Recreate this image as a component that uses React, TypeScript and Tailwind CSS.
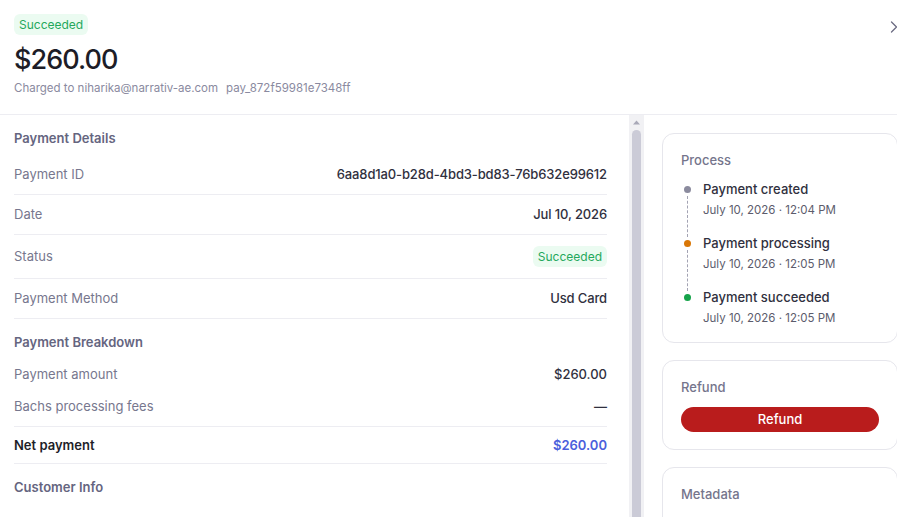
import { ChevronRight } from "lucide-react";

const details = [
  { label: "Payment ID", value: "6aa8d1a0-b28d-4bd3-bd83-76b632e99612" },
  { label: "Date", value: "Jul 10, 2026" },
  { label: "Status", badge: true },
  { label: "Payment Method", value: "Usd Card" },
];

const events = [
  { title: "Payment created", time: "July 10, 2026 · 12:04 PM", dot: "bg-[#8b8b9e]" },
  { title: "Payment processing", time: "July 10, 2026 · 12:05 PM", dot: "bg-[#d97706]" },
  { title: "Payment succeeded", time: "July 10, 2026 · 12:05 PM", dot: "bg-[#16a34a]" },
];

function Badge() {
  return (
    <span className="flex h-[21px] items-center rounded-md bg-[#ebfbf1] px-[5px] text-[12px] leading-4 text-[#25a85c]">
      Succeeded
    </span>
  );
}

function SectionTitle({ children }: { children: React.ReactNode }) {
  return (
    <div className="h-[18px] text-[13px] font-semibold leading-[18px] text-[#656580]">
      {children}
    </div>
  );
}

function Card({
  title,
  children,
  tight,
}: {
  title: string;
  children?: React.ReactNode;
  tight?: boolean;
}) {
  return (
    <div
      className={`rounded-xl border border-[#e6e6ec] px-[18px] pt-[17px] ${
        tight ? "pb-[16px]" : "pb-[17px]"
      }`}
    >
      <div className="h-[18px] text-[13px] font-medium leading-[18px] text-[#75758c]">{title}</div>
      {children}
    </div>
  );
}

export default function App() {
  return (
    <div
      className="h-[517px] w-[897px] overflow-hidden bg-white"
      style={{ fontFamily: "Inter, 'Noto Sans', sans-serif" }}
    >
      <div className="flex h-[620px] w-[916px] flex-col">
        {/* Header */}
        <div className="flex items-start justify-between border-b border-[#ededf2] pl-[14px] pr-3 pt-[14px] pb-[18px]">
          <div className="flex flex-col items-start">
            <Badge />
            <div className="mt-2 text-[27px] font-medium leading-[34px] tracking-[-0.035em] text-[#1d1d27]">
              $260.00
            </div>
            <div className="mt-[3px] flex gap-2 text-[11.5px] leading-4 text-[#8a8aa0]">
              <span>Charged to niharika@narrativ-ae.com</span>
              <span>pay_872f59981e7348ff</span>
            </div>
          </div>
          <ChevronRight size={20} strokeWidth={1.5} className="mt-[3px] text-[#6b6b82]" />
        </div>

        <div className="flex min-h-0 flex-1">
          {/* Left: details */}
          <div className="w-[629px] shrink-0 overflow-hidden pl-[14px] pr-[22px] pt-[14px]">
            <SectionTitle>Payment Details</SectionTitle>
            <div className="mt-2">
              {details.map((d) => (
                <div
                  key={d.label}
                  className={`flex items-center justify-between border-b border-[#ededf2] text-[13px] ${
                    d.badge ? "h-[44px]" : "h-[40px]"
                  }`}
                >
                  <span className="text-[#77778e]">{d.label}</span>
                  {d.badge ? (
                    <Badge />
                  ) : (
                    <span className="font-medium tracking-[-0.01em] text-[#30303e]">{d.value}</span>
                  )}
                </div>
              ))}
            </div>

            <div className="pt-[14px]">
              <SectionTitle>Payment Breakdown</SectionTitle>
            </div>
            <div className="mt-2 border-b border-[#ededf2] pb-[3px] text-[13px]">
              <div className="flex h-[32px] items-center justify-between">
                <span className="text-[#77778e]">Payment amount</span>
                <span className="font-medium text-[#30303e]">$260.00</span>
              </div>
              <div className="flex h-[32px] items-center justify-between">
                <span className="text-[#77778e]">Bachs processing fees</span>
                <span className="font-medium text-[#30303e]">—</span>
              </div>
            </div>
            <div className="flex h-[37px] items-center justify-between border-b border-[#ededf2] pt-[2px] text-[13px] font-semibold">
              <span className="text-[#1e1e28]">Net payment</span>
              <span className="text-[#4b5fdc]">$260.00</span>
            </div>

            <div className="pt-[14px]">
              <SectionTitle>Customer Info</SectionTitle>
            </div>
          </div>

          {/* Scrollbar */}
          <div className="flex w-[15px] shrink-0 flex-col items-center bg-[#f1f1f4]">
            <svg width="15" height="15" viewBox="0 0 15 15" className="shrink-0">
              <path d="M4 9.5 L7.5 5.5 L11 9.5 Z" fill="#a9a9b8" />
            </svg>
            <div className="h-[480px] w-[9px] rounded-full bg-[#cbcbd7]" />
          </div>

          {/* Right: side cards */}
          <div className="flex flex-1 flex-col gap-[17px] px-[18px] pt-[18px]">
            <Card title="Process" tight>
              <div className="mt-[11px] pl-[2px]">
                {events.map((e, i) => (
                  <div key={e.title} className="flex gap-3">
                    <div className="flex w-[8px] flex-col items-center">
                      <span className={`mt-[6px] h-[7px] w-[7px] shrink-0 rounded-full ${e.dot}`} />
                      {i < events.length - 1 && (
                        <span className="mt-[3px] mb-[-3px] flex-1 border-l border-dashed border-[#a3a3b3]" />
                      )}
                    </div>
                    <div className={i < events.length - 1 ? "pb-4" : ""}>
                      <div className="text-[13px] font-medium leading-[18px] text-[#30303e]">{e.title}</div>
                      <div className="mt-[4px] text-[11.5px] leading-4 text-[#5c5c6c]">{e.time}</div>
                    </div>
                  </div>
                ))}
              </div>
            </Card>

            <Card title="Refund">
              <button className="mt-[11px] flex h-[25px] w-full items-center justify-center rounded-full bg-[#b91c1c] text-[13px] font-medium text-white">
                Refund
              </button>
            </Card>

            <Card title="Metadata">
              <div className="h-10" />
            </Card>
          </div>
        </div>
      </div>
    </div>
  );
}
